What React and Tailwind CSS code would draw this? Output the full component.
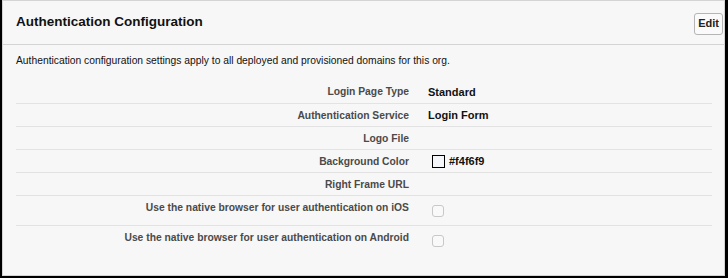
const rows = [
  { label: "Login Page Type", value: "Standard" },
  { label: "Authentication Service", value: "Login Form" },
  { label: "Logo File", value: "" },
  { label: "Background Color", value: "#f4f6f9", swatch: true },
  { label: "Right Frame URL", value: "" },
];

const checkRows = [
  "Use the native browser for user authentication on iOS",
  "Use the native browser for user authentication on Android",
];

export default function App() {
  return (
    <div
      className="w-[728px] h-[278px] border-l-2 border-r-[3px] border-b-2 border-black bg-black"
      style={{ fontFamily: '"Liberation Sans", Arial, sans-serif' }}
    >
      <div className="h-full border border-[#d4d4d4] bg-[#f7f7f7]">
        {/* header */}
        <div className="h-[44px] flex items-center justify-between pl-[13px] pr-[1px] border-b border-[#d4d4d4]">
          <h1 className="text-[13.5px] font-bold text-[#111]">Authentication Configuration</h1>
          <button className="h-[22px] px-[3px] mt-[2px] rounded-[3px] border border-[#b5b5b5] bg-[#fafafa] text-[11px] font-bold text-[#222]">
            Edit
          </button>
        </div>

        <p className="pl-[13px] pt-[8px] text-[10.3px] text-[#111]">
          Authentication configuration settings apply to all deployed and provisioned domains for this org.
        </p>

        <div className="mx-[13px] mt-[12px] mr-[12px]">
          {rows.map((r, i) => (
            <div
              key={r.label}
              className={`flex items-center h-[23px] ${i > 0 ? "border-t border-[#e3e3e3]" : ""}`}
            >
              <div className="w-[393px] text-right text-[10.3px] font-bold text-[#4a4a4a]">{r.label}</div>
              <div className="pl-[19px] flex items-center gap-[4px] text-[11px] font-bold text-[#111]">
                {r.swatch && <span className="ml-[4px] w-[13px] h-[13px] border border-black bg-[#f4f6f9]" />}
                {r.value}
              </div>
            </div>
          ))}
          {checkRows.map((label) => (
            <div key={label} className="flex border-t border-[#e3e3e3] h-[30px] pt-[6px]">
              <div className="w-[393px] text-right text-[10.3px] font-bold text-[#4a4a4a] leading-[12px]">{label}</div>
              <div className="pl-[23px] pt-[3px]">
                <span className="block w-[12px] h-[12px] rounded-[3px] border border-[#c8c8c8] bg-[#f9f9f9]" />
              </div>
            </div>
          ))}
        </div>
      </div>
    </div>
  );
}
